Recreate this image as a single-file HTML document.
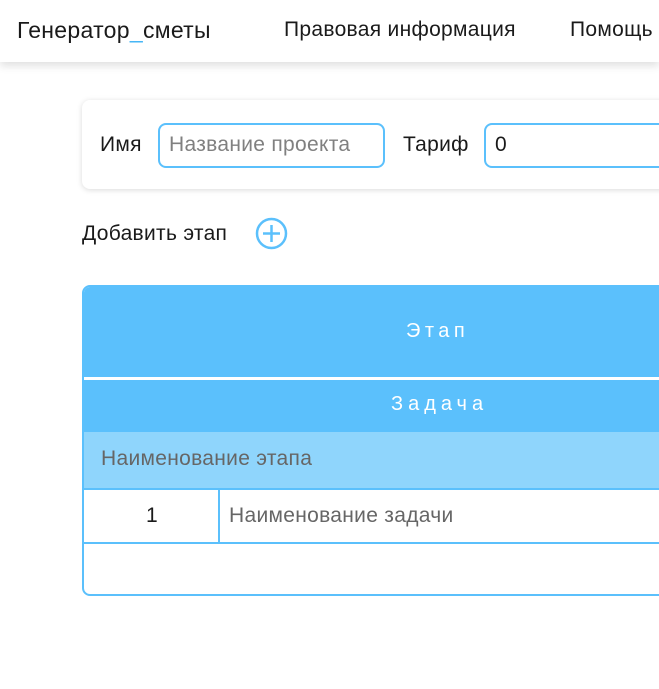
<!DOCTYPE html>
<html><head><meta charset="utf-8"><style>
*{margin:0;padding:0;box-sizing:border-box}
body{width:659px;height:689px;overflow:hidden;background:#fff;font-family:"Liberation Sans","DejaVu Sans",sans-serif;color:#1a1a1a;position:relative;letter-spacing:.3px}
.hdr{position:absolute;left:0;top:0;width:659px;height:62px;background:#fff;box-shadow:0 4px 8px rgba(0,0,0,.12)}
.t{position:absolute;white-space:nowrap}
.card{position:absolute;left:82px;top:100px;width:620px;height:89px;border-radius:8px;background:#fff;box-shadow:0 1px 6px rgba(0,0,0,.15)}
.inp{position:absolute;border:2px solid #5bc0fc;border-radius:8px;background:#fff;font-size:21px;padding:8px 9px}
.tbl{position:absolute;left:82px;top:285px;width:620px;height:311px;border:2px solid #5bc0fc;border-radius:8px;overflow:hidden;background:#fff}
</style></head><body>
<div class="hdr">
<div class="t" style="left:17px;top:17px;font-size:23px">Генератор<span style="color:#42b4f6">_</span>сметы</div>
<div class="t" style="left:284px;top:18px;font-size:21px">Правовая информация</div>
<div class="t" style="left:570px;top:18px;font-size:21px">Помощь</div>
</div>
<div class="card"></div>
<div class="t" style="left:100px;top:133px;font-size:21px">Имя</div>
<div class="inp" style="left:158px;top:123px;width:227px;height:45px;color:#808080">Название проекта</div>
<div class="t" style="left:403px;top:133px;font-size:21px">Тариф</div>
<div class="inp" style="left:484px;top:123px;width:220px;height:45px">0</div>
<div class="t" style="left:82px;top:222px;font-size:21px">Добавить этап</div>
<svg style="position:absolute;left:255px;top:217px" width="33" height="33" viewBox="0 0 33 33"><circle cx="16.5" cy="16.5" r="14.5" fill="none" stroke="#5bc0fc" stroke-width="2.5"/><path d="M16.5 8v17M8 16.5h17" stroke="#5bc0fc" stroke-width="2.5"/></svg>
<div class="tbl">
<div style="position:absolute;left:0;top:0;width:100%;height:90px;background:#5bc0fc"></div>
<div style="position:absolute;left:0;top:90px;width:100%;height:3px;background:#fff"></div>
<div style="position:absolute;left:0;top:93px;width:100%;height:52px;background:#5bc0fc"></div>
<div style="position:absolute;left:0;top:145px;width:100%;height:56px;background:#8fd5fc"></div>
<div style="position:absolute;left:0;top:201px;width:100%;height:2px;background:#5bc0fc"></div>
<div style="position:absolute;left:0;top:255px;width:100%;height:2px;background:#5bc0fc"></div>
<div style="position:absolute;left:134px;top:201px;width:2px;height:55px;background:#5bc0fc"></div>
<div class="t" style="left:322px;top:33px;font-size:20px;color:#fff;letter-spacing:4.5px">Этап</div>
<div class="t" style="left:307px;top:106px;font-size:20px;color:#fff;letter-spacing:5px">Задача</div>
<div class="t" style="left:17px;top:160px;font-size:21px;color:#666">Наименование этапа</div>
<div class="t" style="left:62px;top:217px;font-size:21px">1</div>
<div class="t" style="left:145px;top:217px;font-size:21px;color:#666">Наименование задачи</div>
</div>
</body></html>
